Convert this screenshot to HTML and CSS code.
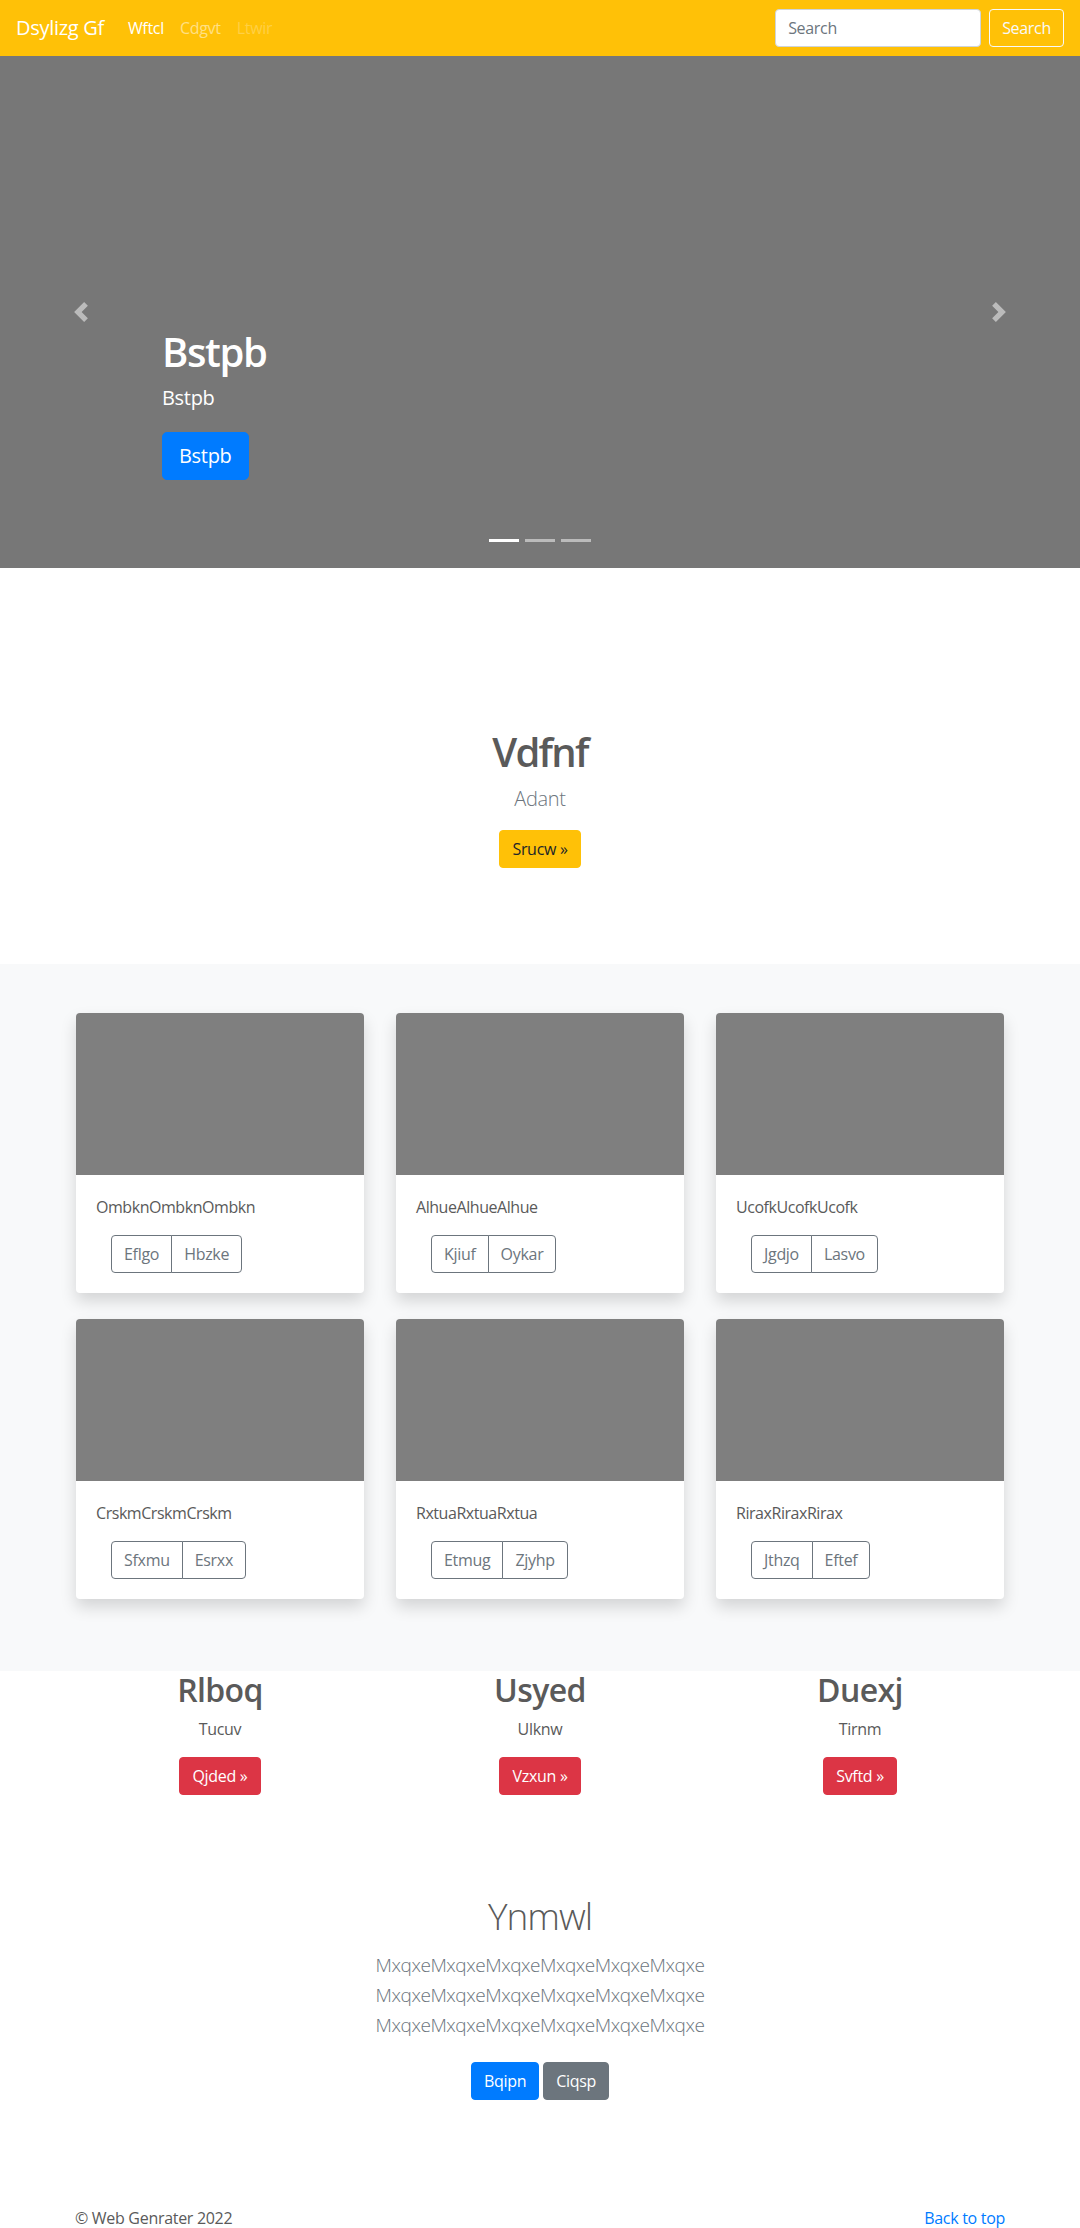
FILE: index.html
```html
<!DOCTYPE html>
<html lang="en">
<head>
<meta charset="utf-8">
<title>Dsylizg Gf</title>
<link rel="stylesheet" href="styles.css">
</head>
<body>
<nav class="navbar">
  <a class="brand" href="#">Dsylizg Gf</a>
  <ul class="nav">
    <li><a class="nav-link active" href="#">Wftcl</a></li>
    <li><a class="nav-link" href="#">Cdgvt</a></li>
    <li><a class="nav-link disabled" href="#">Ltwir</a></li>
  </ul>
  <form class="search">
    <input class="search-input" type="text" placeholder="Search">
    <button class="btn btn-outline-light" type="button">Search</button>
  </form>
</nav>

<div class="carousel">
  <ol class="indicators">
    <li class="active"></li>
    <li></li>
    <li></li>
  </ol>
  <div class="caption">
    <h1 class="caption-title">Bstpb</h1>
    <p class="caption-text">Bstpb</p>
    <p class="caption-action"><a class="btn btn-lg btn-primary" href="#">Bstpb</a></p>
  </div>
  <a class="control control-prev" href="#">
    <svg class="control-icon" viewBox="0 0 8 8" width="20" height="20"><path fill="#fff" d="M5.25 0l-4 4 4 4 1.5-1.5L4.25 4l2.5-2.5L5.25 0z"/></svg>
  </a>
  <a class="control control-next" href="#">
    <svg class="control-icon" viewBox="0 0 8 8" width="20" height="20"><path fill="#fff" d="M2.75 0l-1.5 1.5L3.75 4l-2.5 2.5L2.75 8l4-4-4-4z"/></svg>
  </a>
</div>

<section class="jumbotron">
  <h1 class="heading">Vdfnf</h1>
  <p class="lead">Adant</p>
  <p class="jumbo-action"><a class="btn btn-warning" href="#">Srucw &raquo;</a></p>
</section>

<div class="album">
  <div class="card-grid">
    <div class="card">
      <div class="card-img"></div>
      <div class="card-body">
        <p class="card-text">OmbknOmbknOmbkn</p>
        <div class="btn-group"><button class="btn btn-outline-secondary" type="button">Eflgo</button><button class="btn btn-outline-secondary" type="button">Hbzke</button></div>
      </div>
    </div>
    <div class="card">
      <div class="card-img"></div>
      <div class="card-body">
        <p class="card-text">AlhueAlhueAlhue</p>
        <div class="btn-group"><button class="btn btn-outline-secondary" type="button">Kjiuf</button><button class="btn btn-outline-secondary" type="button">Oykar</button></div>
      </div>
    </div>
    <div class="card">
      <div class="card-img"></div>
      <div class="card-body">
        <p class="card-text">UcofkUcofkUcofk</p>
        <div class="btn-group"><button class="btn btn-outline-secondary" type="button">Jgdjo</button><button class="btn btn-outline-secondary" type="button">Lasvo</button></div>
      </div>
    </div>
    <div class="card">
      <div class="card-img"></div>
      <div class="card-body">
        <p class="card-text">CrskmCrskmCrskm</p>
        <div class="btn-group"><button class="btn btn-outline-secondary" type="button">Sfxmu</button><button class="btn btn-outline-secondary" type="button">Esrxx</button></div>
      </div>
    </div>
    <div class="card">
      <div class="card-img"></div>
      <div class="card-body">
        <p class="card-text">RxtuaRxtuaRxtua</p>
        <div class="btn-group"><button class="btn btn-outline-secondary" type="button">Etmug</button><button class="btn btn-outline-secondary" type="button">Zjyhp</button></div>
      </div>
    </div>
    <div class="card">
      <div class="card-img"></div>
      <div class="card-body">
        <p class="card-text">RiraxRiraxRirax</p>
        <div class="btn-group"><button class="btn btn-outline-secondary" type="button">Jthzq</button><button class="btn btn-outline-secondary" type="button">Eftef</button></div>
      </div>
    </div>
  </div>
</div>

<div class="marketing">
  <div class="feature">
    <h2 class="feature-title">Rlboq</h2>
    <p class="feature-text">Tucuv</p>
    <p class="feature-action"><a class="btn btn-danger" href="#">Qjded &raquo;</a></p>
  </div>
  <div class="feature">
    <h2 class="feature-title">Usyed</h2>
    <p class="feature-text">Ulknw</p>
    <p class="feature-action"><a class="btn btn-danger" href="#">Vzxun &raquo;</a></p>
  </div>
  <div class="feature">
    <h2 class="feature-title">Duexj</h2>
    <p class="feature-text">Tirnm</p>
    <p class="feature-action"><a class="btn btn-danger" href="#">Svftd &raquo;</a></p>
  </div>
</div>

<section class="intro">
  <h1 class="intro-title">Ynmwl</h1>
  <p class="lead intro-lead">MxqxeMxqxeMxqxeMxqxeMxqxeMxqxe<br>MxqxeMxqxeMxqxeMxqxeMxqxeMxqxe<br>MxqxeMxqxeMxqxeMxqxeMxqxeMxqxe</p>
  <p class="intro-actions"><a class="btn btn-primary" href="#">Bqipn</a> <a class="btn btn-secondary" href="#">Ciqsp</a></p>
</section>

<footer class="footer">
  <p class="footer-copy">&copy; Web Genrater 2022</p>
  <p class="footer-top"><a href="#">Back to top</a></p>
</footer>
</body>
</html>
```

FILE: styles.css
```css
* { box-sizing: border-box; }

body {
  margin: 0;
  font-family: "Open Sans", "Noto Sans", "Liberation Sans", sans-serif;
  font-size: 16px;
  line-height: 1.5;
  letter-spacing: -0.3px;
  color: #5a5a5a;
  background: #fff;
}

p { margin: 0 0 16px; }
h1, h2 { margin: 0 0 8px; line-height: 1.2; }

a { color: #007bff; text-decoration: none; }

/* buttons */
.btn {
  display: inline-block;
  font-family: inherit;
  font-size: 16px;
  font-weight: 400;
  line-height: 24px;
  letter-spacing: -0.3px;
  padding: 6px 12px;
  border: 1px solid transparent;
  border-radius: 4px;
  text-align: center;
  vertical-align: middle;
  background: transparent;
  cursor: pointer;
}
.btn-lg { font-size: 20px; line-height: 30px; padding: 8px 16px; border-radius: 5px; }
.btn-primary { background: #007bff; border-color: #007bff; color: #fff; }
.btn-secondary { background: #6c757d; border-color: #6c757d; color: #fff; }
.btn-warning { background: #ffc107; border-color: #ffc107; color: #212529; }
.btn-danger { background: #dc3545; border-color: #dc3545; color: #fff; }
.btn-outline-light { border-color: #f8f9fa; color: #f8f9fa; }
.btn-outline-secondary { border-color: #6c757d; color: #6c757d; background: #fff; }

/* navbar */
.navbar {
  display: flex;
  align-items: center;
  height: 56px;
  padding: 8px 16px;
  background: #ffc107;
}
.brand {
  font-size: 20px;
  line-height: 30px;
  padding: 5px 0;
  margin-right: 16px;
  color: #fff;
}
.nav {
  display: flex;
  list-style: none;
  margin: 0;
  padding: 0;
}
.nav-link {
  display: block;
  padding: 8px;
  color: rgba(255, 255, 255, 0.5);
}
.nav-link.active { color: #fff; }
.nav-link.disabled { color: rgba(255, 255, 255, 0.25); }
.search {
  display: flex;
  align-items: center;
  margin-left: auto;
}
.search-input {
  width: 206px;
  height: 38px;
  padding: 6px 12px;
  margin-right: 8px;
  font-family: inherit;
  font-size: 16px;
  letter-spacing: -0.3px;
  color: #495057;
  background: #fff;
  border: 1px solid #ced4da;
  border-radius: 4px;
}
.search-input::placeholder { color: #6c757d; }

/* carousel */
.carousel {
  position: relative;
  height: 512px;
  margin-bottom: 64px;
  background: #777;
}
.indicators {
  position: absolute;
  left: 15%;
  right: 15%;
  bottom: 26px;
  display: flex;
  justify-content: center;
  margin: 0;
  padding: 0;
  list-style: none;
}
.indicators li {
  width: 30px;
  height: 3px;
  margin: 0 3px;
  background: #fff;
  opacity: 0.5;
}
.indicators li.active { opacity: 1; }
.caption {
  position: absolute;
  left: 15%;
  right: 15%;
  bottom: 52px;
  padding: 20px 0;
  color: #fff;
  text-align: left;
}
.caption-title { font-size: 40px; font-weight: 600; letter-spacing: -1.4px; }
.caption-text { font-size: 20px; line-height: 1.4; margin-bottom: 20px; }
.control {
  position: absolute;
  top: 0;
  bottom: 0;
  width: 15%;
  display: flex;
  align-items: center;
  justify-content: center;
}
.control-prev { left: 0; }
.control-next { right: 0; }
.control-icon { display: block; opacity: 0.5; }

/* jumbotron */
.jumbotron {
  padding: 96px 0 96px;
  text-align: center;
}
.heading { font-size: 40px; font-weight: 600; letter-spacing: -1.7px; }
.lead { font-size: 20px; font-weight: 300; color: #6c757d; }
.jumbo-action { margin: 0; }

/* album */
.album {
  background: #f8f9fa;
  padding: 49px 0 72px;
}
.card-grid {
  width: 928px;
  margin: 0 auto;
  display: grid;
  grid-template-columns: repeat(3, 288px);
  column-gap: 32px;
  row-gap: 26px;
}
.card {
  background: #fff;
  border-radius: 4px;
  overflow: hidden;
  box-shadow: 0 8px 16px rgba(0, 0, 0, 0.15);
}
.card-img { height: 162px; background: #7f7f7f; }
.card-body { padding: 20px; }
.card-text { margin-bottom: 16px; letter-spacing: -0.45px; }
.btn-group {
  display: inline-flex;
  margin-left: 15px;
}
.btn-group .btn:first-child { border-top-right-radius: 0; border-bottom-right-radius: 0; }
.btn-group .btn:last-child { border-top-left-radius: 0; border-bottom-left-radius: 0; margin-left: -1px; }

/* marketing */
.marketing {
  width: 960px;
  margin: 0 auto;
  display: grid;
  grid-template-columns: repeat(3, 1fr);
}
.feature {
  text-align: center;
  padding: 0 15px;
  margin-bottom: 24px;
}
.feature-title { font-size: 32px; font-weight: 600; letter-spacing: -0.6px; }
.feature-text { margin: 0 12px 16px; }

/* intro */
.intro {
  padding: 57px 0 98px;
  text-align: center;
}
.intro-title { font-size: 37px; font-weight: 300; letter-spacing: -1px; line-height: 48px; }
.intro-lead { margin-bottom: 16px; font-size: 19px; line-height: 30px; letter-spacing: -0.45px; padding-top: 2px; }
.intro-actions { margin: 0; padding: 6px 0 8px; }

/* footer */
.footer {
  width: 930px;
  margin: 0 auto;
  display: flex;
  justify-content: space-between;
}
```
